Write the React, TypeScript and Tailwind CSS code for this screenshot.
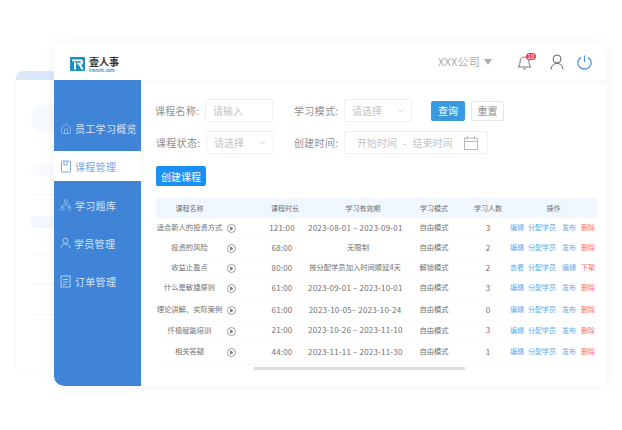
import { ChevronDown, House, Network } from "lucide-react";

type Row = {
  name: string;
  time: string;
  period: string;
  mode: string;
  count: number;
  h: string;
  actions?: string[];
};

const rows: Row[] = [
  { name: "适合新人的投资方式", time: "121:00", period: "2023-08-01 – 2023-09-01", mode: "自由模式", count: 3, h: "h-[20px]" },
  { name: "投资的风险", time: "68:00", period: "无限制", mode: "自由模式", count: 2, h: "h-[20px]" },
  { name: "收益止盈点", time: "80:00", period: "按分配学员加入时间顺延4天", mode: "解锁模式", count: 2, h: "h-[20px]", actions: ["查看", "分配学员", "编辑", "下架"] },
  { name: "什么是敏捷原则", time: "61:00", period: "2023-09-01 – 2023-10-01", mode: "自由模式", count: 3, h: "h-[20px]" },
  { name: "理论讲解、实际案例", time: "61:00", period: "2023-10-05– 2023-10-24", mode: "自由模式", count: 0, h: "h-[24px]" },
  { name: "仟极赋能培训", time: "21:00", period: "2023-10-26 – 2023-11-10", mode: "自由模式", count: 3, h: "h-[17px]" },
  { name: "相关答疑", time: "44:00", period: "2023-11-11 – 2023-11-30", mode: "自由模式", count: 1, h: "h-[26px]" },
];

const grid = "grid grid-cols-[67px_33px_52px_94px_64px_44px_87px] items-center";

function BookIcon() {
  return (
    <svg width="12" height="13" viewBox="0 0 12 13" fill="none" stroke="currentColor" strokeWidth="1">
      <rect x="1.500" y="1" width="9" height="11" rx="1" />
      <path d="M4 1V5.500L5.500 4.300L7 5.500V1" />
    </svg>
  );
}

function OrderIcon() {
  return (
    <svg width="12" height="13" viewBox="0 0 12 13" fill="none" stroke="currentColor" strokeWidth="0.8">
      <rect x="1" y="1" width="9" height="11" />
      <path d="M3 4.500H8M3 7H8M3 9.500H6" />
    </svg>
  );
}

function StudentIcon() {
  return (
    <svg width="11" height="12" viewBox="0 0 12 13" fill="none" stroke="currentColor" strokeWidth="0.8">
      <circle cx="6" cy="4" r="2.800" />
      <path d="M1 12C1.500 9 3.500 7.500 6 7.500C8.500 7.500 10.500 9 11 12" />
    </svg>
  );
}

const nav = [
  { label: "员工学习概览", icon: <House size={12} strokeWidth={1} />, cls: "h-[71px] items-end pb-[15px] text-[#d3e3f8]" },
  { label: "课程管理", icon: <BookIcon />, cls: "h-[30px] items-center bg-white text-[#7ba7df]" },
  { label: "学习题库", icon: <Network size={12} strokeWidth={0.9} />, cls: "mt-[5px] h-[38px] items-center text-[#d3e3f8]" },
  { label: "学员管理", icon: <StudentIcon />, cls: "h-[38px] items-center text-[#d3e3f8]" },
  { label: "订单管理", icon: <OrderIcon />, cls: "h-[38px] items-center text-[#d3e3f8]" },
];

function Field({ label, children, labelW }: { label: string; children: React.ReactNode; labelW: string }) {
  return (
    <div className="flex items-center">
      <span className={`${labelW} text-[10px] tracking-[0.3px] text-[#8f8f8f]`}>{label}</span>
      {children}
    </div>
  );
}

function Select({ w }: { w: string }) {
  return (
    <div className={`${w} flex h-[23px] items-center justify-between rounded-[2px] border border-[#f0f0f0] pl-[7px] pr-[5px] text-[10px] text-[#c4c4c4]`}>
      请选择
      <ChevronDown size={11} strokeWidth={1} className="text-[#aaaaaa]" />
    </div>
  );
}

export default function App() {
  return (
    <div className="relative h-[430px] w-[622px] overflow-hidden bg-white font-['Noto_Sans_CJK_SC','Noto_Sans',sans-serif]">
      {/* card sitting behind the main window */}
      <div className="absolute left-[15px] top-[71px] h-[299px] w-[60px] overflow-hidden rounded-tl-[8px] border-b border-l border-[#f8f9fa] bg-white">
        <div className="h-[9px] bg-[#dbe7fa]" />
        <div className="ml-[15px] mt-[25px] h-[28px] w-[40px] rounded-l-full bg-[#f6f9fd]" />
        <div className="ml-[15px] mt-[32px] h-[10px] w-[40px] rounded-l-[4px] bg-[#f8fafd]" />
        <div className="ml-[16px] mt-[19px] h-px w-[40px] bg-[#f5f5f5]" />
        <div className="ml-[15px] mt-[21px] h-[12px] w-[40px] rounded-l-[4px] bg-[#f4f7fd]" />
        <div className="ml-[16px] mt-[26px] h-px w-[40px] bg-[#f5f5f5]" />
        <div className="ml-[16px] mt-[29px] h-px w-[40px] bg-[#f5f5f5]" />
        <div className="ml-[16px] mt-[29px] h-px w-[40px] bg-[#f5f5f5]" />
      </div>

      {/* main window */}
      <div className="absolute left-[54px] top-[43px] flex h-[343px] w-[553px] flex-col rounded-[6px] bg-white shadow-[0_0_12px_rgba(120,130,150,0.10)]">
        <header className="flex h-[37px] shrink-0 items-center pl-[16px] pr-[14px]">
          <svg width="15" height="14" viewBox="0 0 15 14" className="mt-[5px]">
            <rect width="15" height="14" rx="1" fill="#1a8fc4" />
            <path d="M2 2.500H11.500Q13 2.500 13 4V6Q13 7.500 11.500 7.500H11L13.500 12.500H11.300L8.800 7.500H7V5.800H10.800V4.200H2Z" fill="#ffffff" />
            <path d="M4 5H6V12.500H4Z" fill="#ffffff" />
          </svg>
          <div className="ml-[4px] mt-[4px] flex w-[30px] flex-col">
            <span className="h-[11px] text-[10px] font-bold leading-[11px] text-[#333333]">壹人事</span>
            <span className="mt-[1px] h-[4px] text-[4px] font-bold leading-[4px] tracking-[0.2px] text-[#1b8fbf]">trenshi.com</span>
          </div>
          <div className="ml-[319px] flex items-center text-[11px] tracking-[0.2px] text-[#adadad]">
            XXX公司
            <span className="ml-[4px] h-0 w-0 border-x-[4px] border-t-[6px] border-x-transparent border-t-[#adadad]" />
          </div>
          <div className="relative ml-[25px] mt-[2px]">
            <svg width="15" height="15" viewBox="0 0 15 15" fill="none" stroke="#666666" strokeWidth="0.9" className="block">
              <path d="M1 12C2.500 10.500 3 9.500 3 7C3 4 5 2 7.500 2C10 2 12 4 12 7C12 9.500 12.500 10.500 14 12Z" />
              <path d="M6 13.500C6.500 14.300 8.500 14.300 9 13.500" />
            </svg>
            <span className="absolute -top-[2px] left-[9px] flex h-[7px] w-[10px] items-center justify-center rounded-full bg-[#e8414f] text-[6px] leading-none text-white">10</span>
          </div>
          <svg width="14" height="16" viewBox="0 0 14 16" fill="none" stroke="#666666" strokeWidth="1" className="ml-[18px] mt-[1px]">
            <circle cx="7" cy="5" r="4" />
            <path d="M1 15.500C1.500 11.500 3.500 9.500 7 9.500C10.500 9.500 12.500 11.500 13 15.500" />
          </svg>
          <svg width="15" height="15" viewBox="0 0 15 15" fill="none" stroke="#4a8fdc" strokeWidth="1.200" className="ml-[13px] mt-[1px]">
            <path d="M4 2.500C2 3.600 0.800 5.500 0.800 7.700C0.800 11.200 3.800 14.200 7.500 14.200C11.200 14.200 14.200 11.200 14.200 7.700C14.200 5.500 13 3.600 11 2.500" />
            <path d="M7.500 0.500V7" />
          </svg>
        </header>

        <div className="flex min-h-0 flex-1">
          <aside className="w-[87px] shrink-0 rounded-bl-[10px] bg-[#3f84d6]">
            {nav.map(({ label, icon, cls }) => (
              <div key={label} className={`flex gap-[3px] pl-[6px] text-[10px] tracking-[0.3px] ${cls}`}>
                <span className="flex h-[15px] items-center">{icon}</span>
                <span className="leading-[15px]">{label}</span>
              </div>
            ))}
          </aside>

          <main className="min-w-0 flex-1 border-l-[3px] border-t-[3px] border-[#fafafa] pl-[12px] pr-[10px] pt-[16px]">
            <div className="flex items-center">
              <Field label="课程名称:" labelW="w-[49px] -ml-[1px] mr-[1px]">
                <div className="flex h-[23px] w-[68px] items-center rounded-[2px] border border-[#f0f0f0] pl-[7px] text-[10px] text-[#c4c4c4]">请输入</div>
              </Field>
              <div className="ml-[21px]">
                <Field label="学习模式:" labelW="w-[50px]">
                  <Select w="w-[68px]" />
                </Field>
              </div>
              <button className="ml-[19px] h-[20px] w-[34px] rounded-[2px] bg-[#3b99e0] text-[10px] text-white">查询</button>
              <button className="ml-[6px] h-[20px] w-[33px] rounded-[2px] border border-[#e6e6e6] text-[10px] text-[#8f8f8f]">重置</button>
            </div>

            <div className="mt-[9px] flex items-center">
              <Field label="课程状态:" labelW="w-[50px]">
                <Select w="w-[68px]" />
              </Field>
              <div className="ml-[20px]">
                <Field label="创建时间:" labelW="w-[50px]">
                  <div className="flex h-[23px] w-[144px] items-center rounded-[2px] border border-[#f0f0f0] pl-[12px] text-[10px] text-[#c4c4c4]">
                    开始时间
                    <span className="mx-[6px]">-</span>
                    结束时间
                    <svg width="14" height="14" viewBox="0 0 14 14" fill="none" stroke="#aaaaaa" strokeWidth="0.8" className="ml-[12px]">
                      <rect x="0.500" y="2" width="13" height="11.500" />
                      <path d="M0.500 5.500H13.500M3.500 0V3.500M10.500 0V3.500" />
                    </svg>
                  </div>
                </Field>
              </div>
            </div>

            <button className="mt-[12px] block h-[20px] w-[50px] rounded-[2px] bg-[#1a90f5] text-[10px] text-white">创建课程</button>

            <div className="mt-[12px] w-[441px] text-[7.300px] text-[#707070]">
              <div className={`${grid} h-[20px] bg-[#f0f7fe] text-center text-[7px]`}>
                <span>课程名称</span>
                <span />
                <span className="pl-[6px]">课程时长</span>
                <span className="pl-[16px]">学习有效期</span>
                <span>学习模式</span>
                <span>学习人数</span>
                <span>操作</span>
              </div>
              {rows.map((r) => {
                const actions = r.actions ?? ["编辑", "分配学员", "发布", "删除"];
                const isDate = r.period.startsWith("2023");
                return (
                  <div key={r.name} className={`${grid} ${r.h} border-b border-[#fbfbfb] text-center`}>
                    <span className="whitespace-nowrap">{r.name}</span>
                    <svg width="9" height="9" viewBox="0 0 9 9" fill="none" stroke="#777777" strokeWidth="0.7" className="ml-[4px] mt-[2px]">
                      <circle cx="4.500" cy="4.500" r="4" />
                      <path d="M3.500 2.800L6 4.500L3.500 6.200Z" fill="#777777" />
                    </svg>
                    <span className="text-[8px] tracking-[0.2px]">{r.time}</span>
                    <span className={isDate ? "whitespace-nowrap text-[8px] tracking-[0.2px]" : r.period === "无限制" ? "pl-[6px]" : "whitespace-nowrap"}>{r.period}</span>
                    <span>{r.mode}</span>
                    <span className="text-[8px]">{r.count}</span>
                    <div className="flex whitespace-nowrap text-[7px] text-[#5aaef0]">
                      {actions.map((a, i) => (
                        <span key={a} className={i === 3 ? "ml-[5px] text-[#f56c6c]" : i === 1 ? "ml-[4px]" : i === 2 ? "ml-[6px]" : ""}>{a}</span>
                      ))}
                    </div>
                  </div>
                );
              })}
              <div className="ml-[98px] mt-[2px] h-[3px] w-[211px] bg-[#dddddd]" />
            </div>
          </main>
        </div>
      </div>
    </div>
  );
}
